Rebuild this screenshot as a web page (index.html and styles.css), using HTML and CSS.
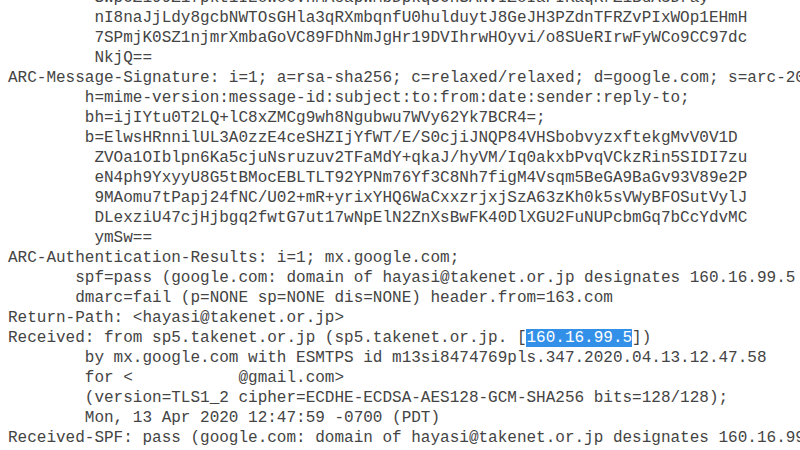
FILE: index.html
```html
<!DOCTYPE html>
<html lang="en">
<head>
    <meta charset="UTF-8">
    <title>Original message</title>
    <link rel="stylesheet" href="styles.css">
</head>
<body>
    <div class="raw-view">
<pre class="raw-headers">         SWpOZ199Z1fpkt1IEoWo0VnMAeapWMbDpkqUOhSANvIZoIaPIKaqKrZ1BuA3Dray
         nI8naJjLdy8gcbNWTOsGHla3qRXmbqnfU0hulduytJ8GeJH3PZdnTFRZvPIxWOp1EHmH
         7SPmjK0SZ1njmrXmbaGoVC89FDhNmJgHr19DVIhrwHOyvi/o8SUeRIrwFyWCo9CC97dc
         NkjQ==
ARC-Message-Signature: i=1; a=rsa-sha256; c=relaxed/relaxed; d=google.com; s=arc-20160816;
        h=mime-version:message-id:subject:to:from:date:sender:reply-to;
        bh=ijIYtu0T2LQ+lC8xZMCg9wh8Ngubwu7WVy62Yk7BCR4=;
        b=ElwsHRnnilUL3A0zzE4ceSHZIjYfWT/E/S0cjiJNQP84VHSbobvyzxftekgMvV0V1D
         ZVOa1OIblpn6Ka5cjuNsruzuv2TFaMdY+qkaJ/hyVM/Iq0akxbPvqVCkzRin5SIDI7zu
         eN4ph9YxyyU8G5tBMocEBLTLT92YPNm76Yf3C8Nh7figM4Vsqm5BeGA9BaGv93V89e2P
         9MAomu7tPapj24fNC/U02+mR+yrixYHQ6WaCxxzrjxjSzA63zKh0k5sVWyBFOSutVylJ
         DLexziU47cjHjbgq2fwtG7ut17wNpElN2ZnXsBwFK40DlXGU2FuNUPcbmGq7bCcYdvMC
         ymSw==
ARC-Authentication-Results: i=1; mx.google.com;
       spf=pass (google.com: domain of hayasi@takenet.or.jp designates 160.16.99.5 as permitted sender) smtp.mailfrom=hayasi@takenet.or.jp;
       dmarc=fail (p=NONE sp=NONE dis=NONE) header.from=163.com
Return-Path: &lt;hayasi@takenet.or.jp&gt;
Received: from sp5.takenet.or.jp (sp5.takenet.or.jp. [<span class="selected">160.16.99.5</span>])
        by mx.google.com with ESMTPS id m13si8474769pls.347.2020.04.13.12.47.58
        for &lt;           @gmail.com&gt;
        (version=TLS1_2 cipher=ECDHE-ECDSA-AES128-GCM-SHA256 bits=128/128);
        Mon, 13 Apr 2020 12:47:59 -0700 (PDT)
Received-SPF: pass (google.com: domain of hayasi@takenet.or.jp designates 160.16.99.5 as permitted sender) client-ip=160.16.99.5;
Authentication-Results: mx.google.com;</pre>
    </div>
</body>
</html>
```

FILE: styles.css
```css
html, body {
    margin: 0;
    background-color: #fff;
}
.raw-view {
    height: 450px;
    overflow: hidden;
}
.raw-headers {
    margin: -12px 0 0 0;
    padding-left: 8px;
    font-family: "Liberation Mono", "DejaVu Sans Mono", monospace;
    font-size: 16px;
    line-height: 20px;
    color: #444;
    white-space: pre;
}
.raw-headers .selected {
    background-color: #3390e8;
    color: #fff;
}
```
